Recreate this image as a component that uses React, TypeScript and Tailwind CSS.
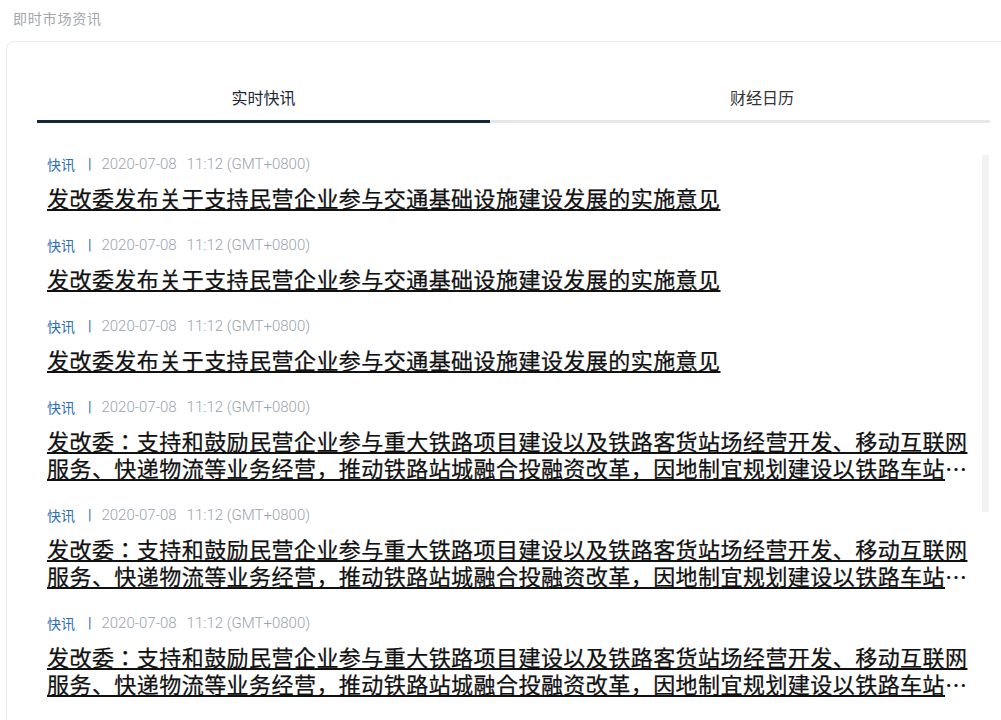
const longTitle =
  "发改委：支持和鼓励民营企业参与重大铁路项目建设以及铁路客货站场经营开发、移动互联网服务、快递物流等业务经营，推动铁路站城融合投融资改革，因地制宜规划建设以铁路车站为中心的综合交通枢纽";
const shortTitle = "发改委发布关于支持民营企业参与交通基础设施建设发展的实施意见";

const news = [shortTitle, shortTitle, shortTitle, longTitle, longTitle, longTitle, shortTitle];

const cjk = { fontFamily: '"Noto Sans CJK SC", "Noto Sans", sans-serif' };
const titleFont = { fontFamily: '"Noto Sans CJK JP", "Noto Sans CJK SC", sans-serif' };

export default function App() {
  return (
    <div className="h-[720px] w-[1001px] overflow-hidden bg-white" style={cjk}>
      <div className="pl-[13px] pt-[8px] text-[14px] leading-[20px] tracking-[0.8px] text-[#a3a6ab]">
        即时市场资讯
      </div>
      <div className="relative ml-[6px] mt-[13px] w-[1060px] rounded-[8px] border border-[#ebebeb] pl-[30px] pt-[43px]">
        <div className="flex w-[953px] border-b-[3px] border-[#e6e7ea]">
          <div className="-mb-[3px] w-[453px] border-b-[3px] border-[#15273d] pb-[11px] text-center text-[16px] leading-[24px] text-[#1c2733]">
            实时快讯
          </div>
          <div className="flex-1 pb-[11px] pl-[240px] text-[16px] leading-[24px] text-[#333]">
            财经日历
          </div>
        </div>

        <div className="absolute left-[975px] top-[113px] h-[357px] w-[7px] bg-[#f2f2f2]" />

        <ul className="w-[938px] pl-[10px] pt-[31px]">
          {news.map((title, i) => (
            <li key={i} className="pb-[24px]">
              <div className="flex items-center text-[14px] leading-[20px]">
                <span className="text-[#2f6db5]">快讯</span>
                <span
                  className="ml-[13px] text-[#2f6db5]"
                  style={{ fontFamily: "Roboto, sans-serif" }}
                >
                  |
                </span>
                <span
                  className="ml-[10px] flex gap-[10px] text-[15px] font-light text-[#9aa3b0]"
                  style={{ fontFamily: "Roboto, sans-serif" }}
                >
                  <span>2020-07-08</span>
                  <span>11:12 (GMT+0800)</span>
                </span>
              </div>
              <div
                className="mt-[10px] line-clamp-2 text-[22px] leading-[27px] tracking-[0.45px] text-[#111] [-webkit-text-stroke:0.25px_#111]"
                style={titleFont}
              >
                <a href="#" className="underline decoration-2 underline-offset-[2px]">
                  {title}
                </a>
              </div>
            </li>
          ))}
        </ul>
      </div>
    </div>
  );
}
